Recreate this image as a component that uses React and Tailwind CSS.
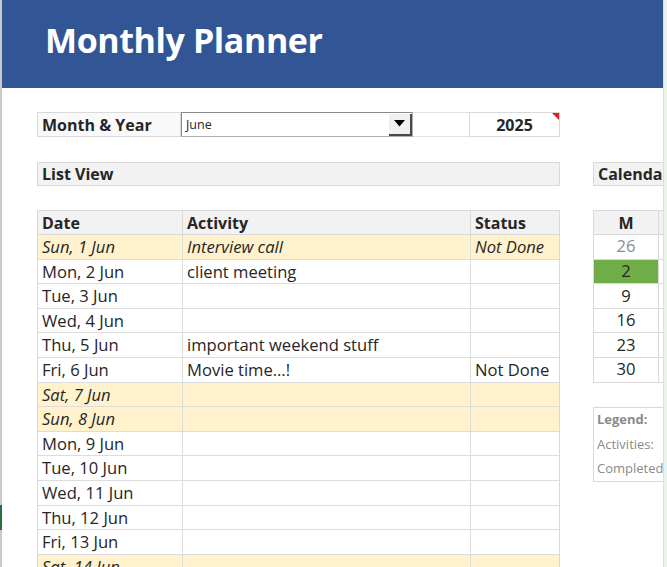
import React from "react";

const days = [
  { date: "Sun, 1 Jun", activity: "Interview call", status: "Not Done", weekend: true },
  { date: "Mon, 2 Jun", activity: "client meeting", status: "" },
  { date: "Tue, 3 Jun", activity: "", status: "" },
  { date: "Wed, 4 Jun", activity: "", status: "" },
  { date: "Thu, 5 Jun", activity: "important weekend stuff", status: "" },
  { date: "Fri, 6 Jun", activity: "Movie time…!", status: "Not Done" },
  { date: "Sat, 7 Jun", activity: "", status: "", weekend: true },
  { date: "Sun, 8 Jun", activity: "", status: "", weekend: true },
  { date: "Mon, 9 Jun", activity: "", status: "" },
  { date: "Tue, 10 Jun", activity: "", status: "" },
  { date: "Wed, 11 Jun", activity: "", status: "" },
  { date: "Thu, 12 Jun", activity: "", status: "" },
  { date: "Fri, 13 Jun", activity: "", status: "" },
  { date: "Sat, 14 Jun", activity: "", status: "", weekend: true },
];

const mondays = [
  { n: "26", muted: true },
  { n: "2", today: true },
  { n: "9" },
  { n: "16" },
  { n: "23" },
  { n: "30" },
];

export default function App() {
  return (
    <div className="w-[667px] h-[567px] overflow-hidden flex bg-white font-['Open_Sans',sans-serif] text-[#262626]">
      {/* left sheet edge */}
      <div className="w-[2px] shrink-0 bg-[#c9c9c9] flex flex-col">
        <div className="h-[505px]" />
        <div className="h-[25px] bg-[#217346]" />
      </div>

      <div className="w-[661px] shrink-0 flex flex-col overflow-hidden">
        {/* Header */}
        <div className="h-[88px] shrink-0 bg-[#325596] flex items-center pl-[43px] pb-[8px]">
          <h1 className="text-white font-bold text-[34px] tracking-[-0.4px]">Monthly Planner</h1>
        </div>

        <div className="pl-[35px] pt-[24px] flex flex-col">
          {/* Month & Year row */}
          <div className="flex h-[25px] text-[16px]">
            <div className="w-[144px] border border-[#d9d9d9] bg-[#f9f9f9] flex items-center pl-[4px] font-bold">
              Month &amp; Year
            </div>
            <div className="w-[232px] border border-[#b0b0b0] border-t-[#8a8a8a] border-l-[#8a8a8a] bg-white flex items-center justify-between pl-[4px]">
              <span className="text-[12.5px] pt-[2px]">June</span>
              <div className="w-[23px] h-[22px] bg-[#f0f0f0] border-r-2 border-b-2 border-[#4a4a4a] flex items-center justify-center">
                <svg width="11" height="7" viewBox="0 0 11 7">
                  <polygon points="0,0 11,0 5.5,6.5" fill="#000" />
                </svg>
              </div>
            </div>
            <div className="w-[56px] border-y border-[#e2e2e2]" />
            <div className="relative w-[91px] border border-[#d9d9d9] flex items-center justify-center font-bold">
              2025
              <div className="absolute top-0 right-0 w-0 h-0 border-t-[7px] border-l-[7px] border-t-[#e02020] border-l-transparent" />
            </div>
          </div>

          <div className="flex mt-[25px] gap-[33px]">
            {/* List view */}
            <div className="w-[523px] shrink-0 flex flex-col">
              <div className="h-[24px] bg-[#f2f2f2] border border-[#d9d9d9] flex items-center pl-[4px] font-bold text-[16px]">
                List View
              </div>

              <div className="mt-[24px] border-l border-r border-[#d9d9d9] text-[16.6px]">
                <div className="grid grid-cols-[144px_288px_91px] h-[25px] bg-[#f2f2f2] border-y border-[#d9d9d9] font-bold text-[16px]">
                  <div className="flex items-center pl-[4px]">Date</div>
                  <div className="flex items-center pl-[4px] border-l border-[#d9d9d9]">Activity</div>
                  <div className="flex items-center pl-[4px] border-l border-[#d9d9d9]">Status</div>
                </div>
                {days.map((d) => (
                  <div
                    key={d.date}
                    className={
                      "grid grid-cols-[144px_288px_91px] h-[24.6px] border-b border-[#dcdcdc] " +
                      (d.weekend ? "bg-[#fff2cc] italic" : "bg-white")
                    }
                  >
                    <div className="flex items-center pl-[4px] whitespace-nowrap">{d.date}</div>
                    <div className="flex items-center pl-[4px] border-l border-[#dcdcdc] whitespace-nowrap">{d.activity}</div>
                    <div className="flex items-center pl-[4px] border-l border-[#dcdcdc] whitespace-nowrap">{d.status}</div>
                  </div>
                ))}
              </div>
            </div>

            {/* Calendar */}
            <div className="flex-1 flex flex-col overflow-hidden">
              <div className="h-[24px] bg-[#f2f2f2] border border-r-0 border-[#d9d9d9] flex items-center pl-[4px] font-bold text-[16px] whitespace-nowrap overflow-hidden">
                Calendar
              </div>

              <div className="mt-[24px] flex text-[16.6px]">
                <div className="w-[66px] shrink-0 flex flex-col border-l border-[#d9d9d9]">
                  <div className="h-[25px] bg-[#f2f2f2] border-y border-r border-[#d9d9d9] flex items-center justify-center font-bold text-[16px]">
                    M
                  </div>
                  {mondays.map((m) => (
                    <div
                      key={m.n}
                      className={
                        "h-[24.6px] border-b border-r border-[#d9d9d9] flex items-center justify-center " +
                        (m.today ? "bg-[#70ad47]" : "bg-white") +
                        (m.muted ? " text-[#8c8c8c]" : "")
                      }
                    >
                      {m.n}
                    </div>
                  ))}
                </div>
                <div className="flex-1 flex flex-col">
                  <div className="h-[25px] bg-[#f2f2f2] border-y border-[#d9d9d9]" />
                  {mondays.map((m) => (
                    <div key={m.n} className="h-[24.6px] border-b border-[#d9d9d9]" />
                  ))}
                </div>
              </div>

              <div className="mt-[24px] h-[75px] border border-r-0 border-[#d9d9d9] flex flex-col pl-[3px] text-[13px] text-[#8a8a8a] whitespace-nowrap">
                <div className="h-[25px] flex items-center font-bold">Legend:</div>
                <div className="h-[24px] flex items-center">Activities:</div>
                <div className="h-[24px] flex items-center">Completed</div>
              </div>
            </div>
          </div>
        </div>
      </div>

      {/* right pane edge */}
      <div className="w-[4px] shrink-0 bg-[#eaf4ea] border-l border-[#d6e4d6]" />
    </div>
  );
}
